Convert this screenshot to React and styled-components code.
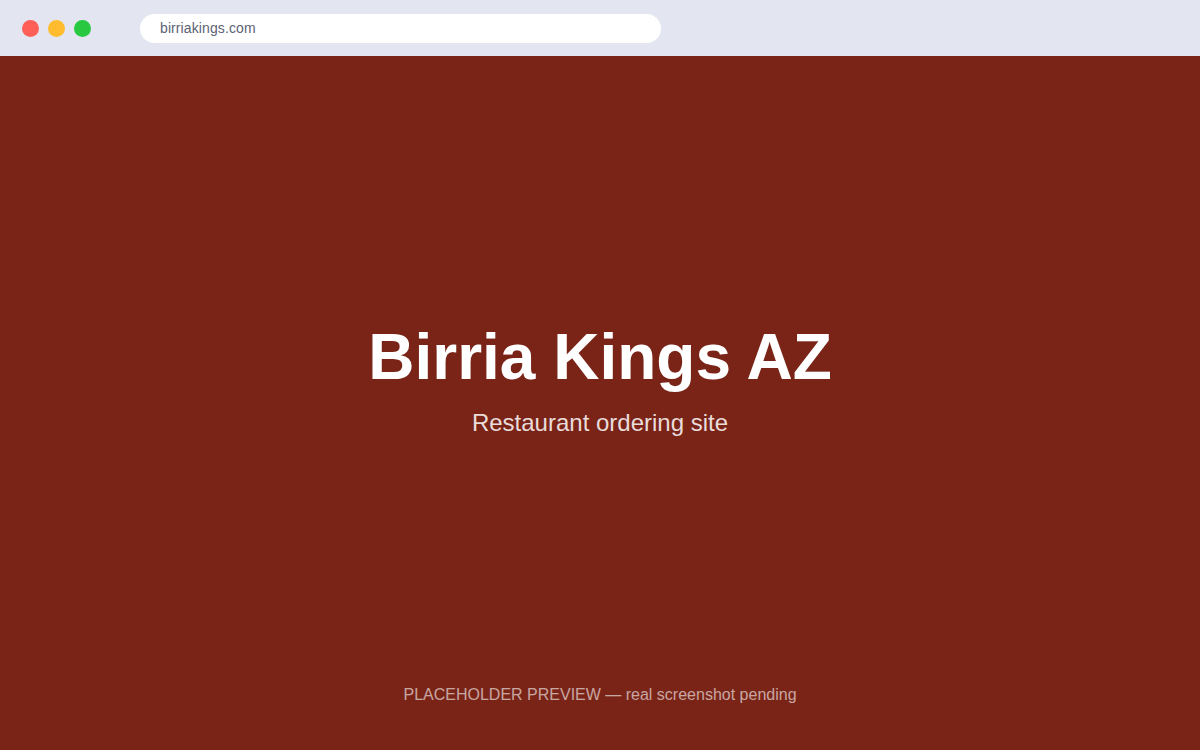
import React from 'react';
import styled, { createGlobalStyle } from 'styled-components';

const GlobalStyle = createGlobalStyle`
  html, body {
    margin: 0;
    padding: 0;
    height: 100%;
  }
  body {
    font-family: "Liberation Sans", Arial, sans-serif;
    background: #7a2418;
  }
  #root {
    height: 100%;
  }
`;

const Window = styled.div`
  display: flex;
  flex-direction: column;
  height: 100vh;
  overflow: hidden;
`;

const TopBar = styled.div`
  display: flex;
  align-items: center;
  height: 56px;
  padding: 0 22px;
  background: #e3e6f0;
  box-sizing: border-box;
  flex-shrink: 0;
`;

const Dots = styled.div`
  display: flex;
  gap: 9px;
  margin-right: 49px;
`;

const Dot = styled.span`
  width: 17px;
  height: 17px;
  border-radius: 50%;
  background: ${p => p.color};
`;

const Address = styled.div`
  width: 521px;
  height: 29px;
  display: flex;
  align-items: center;
  padding: 0 20px;
  box-sizing: border-box;
  background: #ffffff;
  border-radius: 15px;
  font-size: 14px;
  letter-spacing: 0.1px;
  color: #5b6275;
`;

const Page = styled.main`
  flex: 1;
  display: flex;
  flex-direction: column;
  background: #7a2418;
  color: #fff;
`;

const Hero = styled.section`
  flex: 1;
  display: flex;
  flex-direction: column;
  align-items: center;
  justify-content: center;
  padding-top: 20px;
`;

const Title = styled.h1`
  margin: 0;
  font-size: 64px;
  font-weight: 700;
  line-height: 1;
`;

const Subtitle = styled.p`
  margin: 20px 0 0;
  font-size: 24px;
  color: rgba(255, 255, 255, 0.85);
`;

const Footer = styled.footer`
  text-align: center;
  font-size: 16px;
  color: rgba(255, 255, 255, 0.6);
  padding-bottom: 46px;
`;

export default function App() {
  return (
    <>
      <GlobalStyle />
      <Window>
        <TopBar>
          <Dots>
            <Dot color="#ff5f57" />
            <Dot color="#febc2e" />
            <Dot color="#28c840" />
          </Dots>
          <Address>birriakings.com</Address>
        </TopBar>
        <Page>
          <Hero>
            <Title>Birria Kings AZ</Title>
            <Subtitle>Restaurant ordering site</Subtitle>
          </Hero>
          <Footer>PLACEHOLDER PREVIEW — real screenshot pending</Footer>
        </Page>
      </Window>
    </>
  );
}
